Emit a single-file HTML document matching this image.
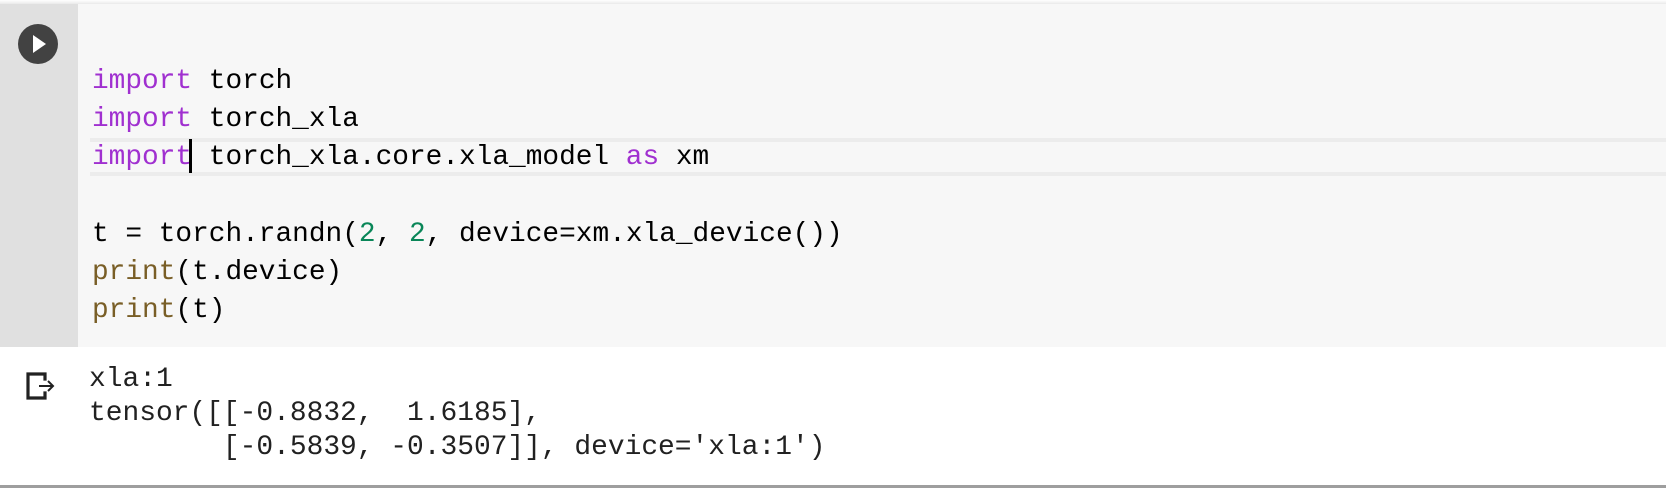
<!DOCTYPE html>
<html><head><style>
html,body{margin:0;padding:0;width:1666px;height:488px;overflow:hidden;background:#fff;position:relative;font-family:"Liberation Mono",monospace}
.top{position:absolute;left:0;top:0;width:1666px;height:4px;background:linear-gradient(#fff,#eaeaea)}
.gut{position:absolute;left:0;top:4px;width:78px;height:343px;background:#e0e0e0}
.code{position:absolute;left:78px;top:4px;width:1588px;height:343px;background:#f7f7f7}
.hl{position:absolute;left:90px;top:138px;width:1576px;height:30px;border-top:4px solid #ececec;border-bottom:4px solid #ececec}
.cur{position:absolute;left:189px;top:139px;width:3px;height:34px;background:#000}
.lines{position:absolute;left:92px;top:63px;font-size:27.8px;line-height:38.2px;color:#000;white-space:pre}
.k{color:#a030d0}.f{color:#795e26}.n{color:#098658}
.out{position:absolute;left:89px;top:363px;font-size:27.9px;line-height:34px;color:#212121;white-space:pre}
.bot{position:absolute;left:0;top:485px;width:1666px;height:3px;background:#9e9e9e}
.play{position:absolute;left:18px;top:24px}
.oi{position:absolute;left:26px;top:372px}
</style></head><body>
<div class="top"></div>
<div class="gut"></div>
<div class="code"></div>
<div class="hl"></div>
<svg class="play" width="40" height="40" viewBox="0 0 40 40"><circle cx="20" cy="20" r="20" fill="#424242"/><path d="M15 11 L28 20 L15 29 Z" fill="#fff"/></svg>
<div class="lines"><span class="k">import</span> torch
<span class="k">import</span> torch_xla
<span class="k">import</span> torch_xla.core.xla_model <span class="k">as</span> xm

t = torch.randn(<span class="n">2</span>, <span class="n">2</span>, device=xm.xla_device())
<span class="f">print</span>(t.device)
<span class="f">print</span>(t)</div>
<div class="cur"></div>
<svg class="oi" width="30" height="28" viewBox="0 0 30 28"><path d="M2 2 H19 M2 2 V26 M2 26 H19 M19 2 V7 M19 21 V26" stroke="#212121" stroke-width="3.2" fill="none" stroke-linecap="square"/><path d="M13 14 H27 M22 9 L27 14 L22 19" stroke="#212121" stroke-width="2" fill="none"/></svg>
<div class="out">xla:1
tensor([[-0.8832,  1.6185],
        [-0.5839, -0.3507]], device='xla:1')</div>
<div class="bot"></div>
</body></html>
